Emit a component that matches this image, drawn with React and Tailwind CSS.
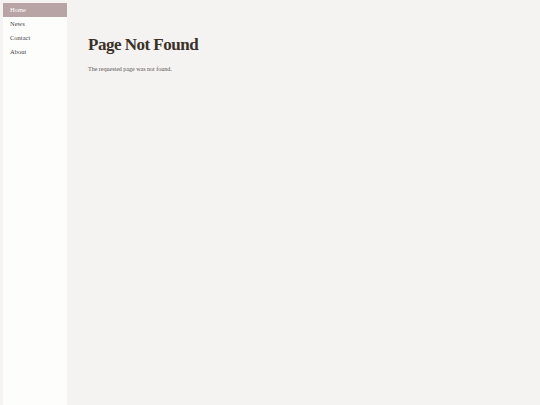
const navItems = ['Home', 'News', 'Contact', 'About']

export default function App() {
  return (
    <div
      className="flex min-h-[405px] bg-[#f5f3f1] pl-[3px] pt-[3px]"
      style={{ fontFamily: '"Liberation Serif", serif' }}
    >
      <aside className="w-[64px] flex-shrink-0 bg-[#fdfdfc]">
        <nav className="flex flex-col">
          {navItems.map((label, i) => (
            <a
              key={label}
              className={`block h-[14px] pl-[7px] text-[6.5px] leading-[14px] ${
                i === 0 ? 'bg-[#b8a4a4] text-white' : 'text-[#444]'
              }`}
            >
              {label}
            </a>
          ))}
        </nav>
      </aside>
      <main className="flex-1 pl-[21px] pt-[31px]">
        <h1 className="text-[17px] font-bold leading-[22px] tracking-[-0.5px] text-[#3a3129]">Page Not Found</h1>
        <p className="mt-[9px] text-[6px] text-[#555]">The requested page was not found.</p>
      </main>
    </div>
  )
}
